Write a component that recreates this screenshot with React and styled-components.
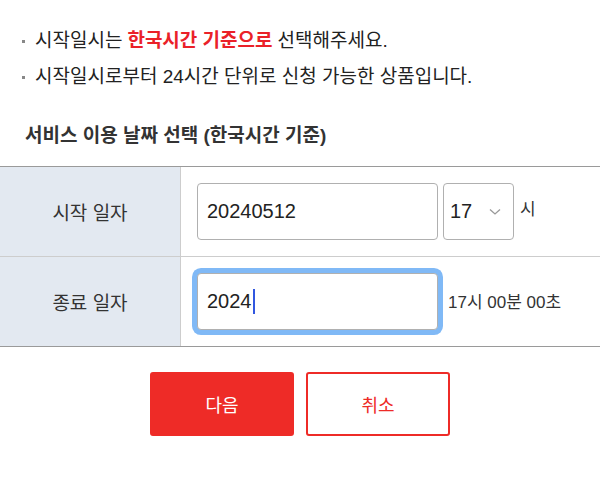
import React from "react";
import styled, { createGlobalStyle } from "styled-components";

const Global = createGlobalStyle`
  html, body { margin: 0; padding: 0; background: #fff; }
  body { font-family: "Liberation Sans", "Noto Sans CJK KR", sans-serif; color: #222; }
  * { box-sizing: border-box; }
`;

const Page = styled.div`
  width: 600px;
  padding-top: 23px;
`;

const Notices = styled.ul`
  list-style: none;
  margin: 0;
  padding: 0 0 0 22px;
`;

const Notice = styled.li`
  display: flex;
  align-items: center;
  font-size: 19px;
  line-height: 36px;
  color: #222;
  &::before {
    content: "";
    width: 3px;
    height: 3px;
    background: #888;
    margin-right: 10px;
    flex: none;
  }
`;

const Emph = styled.strong`
  color: #ea2128;
  font-weight: 700;
  margin: 0 5px;
`;

const Title = styled.h3`
  margin: 28px 0 17px 25px;
  font-size: 19px;
  line-height: 26px;
  font-weight: 700;
  color: #333;
`;

const Table = styled.div`
  display: grid;
  grid-template-columns: 181px 1fr;
  border-top: 1px solid #9a9a9a;
  border-bottom: 1px solid #9a9a9a;
`;

const Label = styled.div`
  height: ${p => (p.$first ? 89 : 90)}px;
  background: #e3e9f1;
  border-right: 1px solid #cdcdcd;
  border-top: ${p => (p.$first ? "none" : "1px solid #cdcdcd")};
  display: flex;
  align-items: center;
  justify-content: center;
  font-size: 19px;
  color: #333;
`;

const Cell = styled.div`
  height: ${p => (p.$first ? 89 : 90)}px;
  display: flex;
  align-items: center;
  padding-left: 16px;
  border-top: ${p => (p.$first ? "none" : "1px solid #cdcdcd")};
`;

const TextInput = styled.div`
  width: 241px;
  height: 57px;
  border: 1px solid #b0b0b0;
  border-radius: 4px;
  padding-left: 9px;
  display: flex;
  align-items: center;
  font-size: 20px;
  color: #222;
  background: #fff;
  box-shadow: ${p => (p.$focused ? "0 0 0 5px #80b9f6" : "none")};
`;

const Caret = styled.span`
  display: inline-block;
  width: 2px;
  height: 25px;
  background: #3157e0;
  margin-left: 1px;
`;

const Select = styled.div`
  width: 71px;
  height: 57px;
  margin-left: 5px;
  border: 1px solid #b0b0b0;
  border-radius: 4px;
  padding: 0 12px 0 6px;
  display: flex;
  align-items: center;
  justify-content: space-between;
  font-size: 20px;
  color: #222;
`;

const Unit = styled.span`
  margin: 0 0 8px 6px;
  font-size: 17px;
  color: #333;
`;

const TimeNote = styled.span`
  margin-left: 10px;
  margin-bottom: 3px;
  font-size: 17px;
  color: #333;
`;

const Buttons = styled.div`
  display: flex;
  justify-content: center;
  gap: 12px;
  margin-top: 25px;
`;

const Button = styled.button`
  width: 144px;
  height: 64px;
  border-radius: 3px;
  font-family: inherit;
  font-size: 18px;
  cursor: pointer;
  border: 2px solid #ee2b27;
  background: ${p => (p.$primary ? "#ee2b27" : "#fff")};
  color: ${p => (p.$primary ? "#fff" : "#ee2b27")};
`;

const Chevron = () => (
  <svg width="12" height="8" viewBox="0 0 12 8" fill="none">
    <path d="M1 1.5 L6 6 L11 1.5" stroke="#999" strokeWidth="1.3" />
  </svg>
);

export default function App() {
  return (
    <>
      <Global />
      <Page>
        <Notices>
          <Notice>
            시작일시는<Emph>한국시간 기준으로</Emph>선택해주세요.
          </Notice>
          <Notice>시작일시로부터 24시간 단위로 신청 가능한 상품입니다.</Notice>
        </Notices>
        <Title>서비스 이용 날짜 선택 (한국시간 기준)</Title>
        <Table>
          <Label $first>시작 일자</Label>
          <Cell $first>
            <TextInput>20240512</TextInput>
            <Select>
              <span>17</span>
              <Chevron />
            </Select>
            <Unit>시</Unit>
          </Cell>
          <Label>종료 일자</Label>
          <Cell>
            <TextInput $focused>
              2024<Caret />
            </TextInput>
            <TimeNote>17시 00분 00초</TimeNote>
          </Cell>
        </Table>
        <Buttons>
          <Button $primary>다음</Button>
          <Button>취소</Button>
        </Buttons>
      </Page>
    </>
  );
}
